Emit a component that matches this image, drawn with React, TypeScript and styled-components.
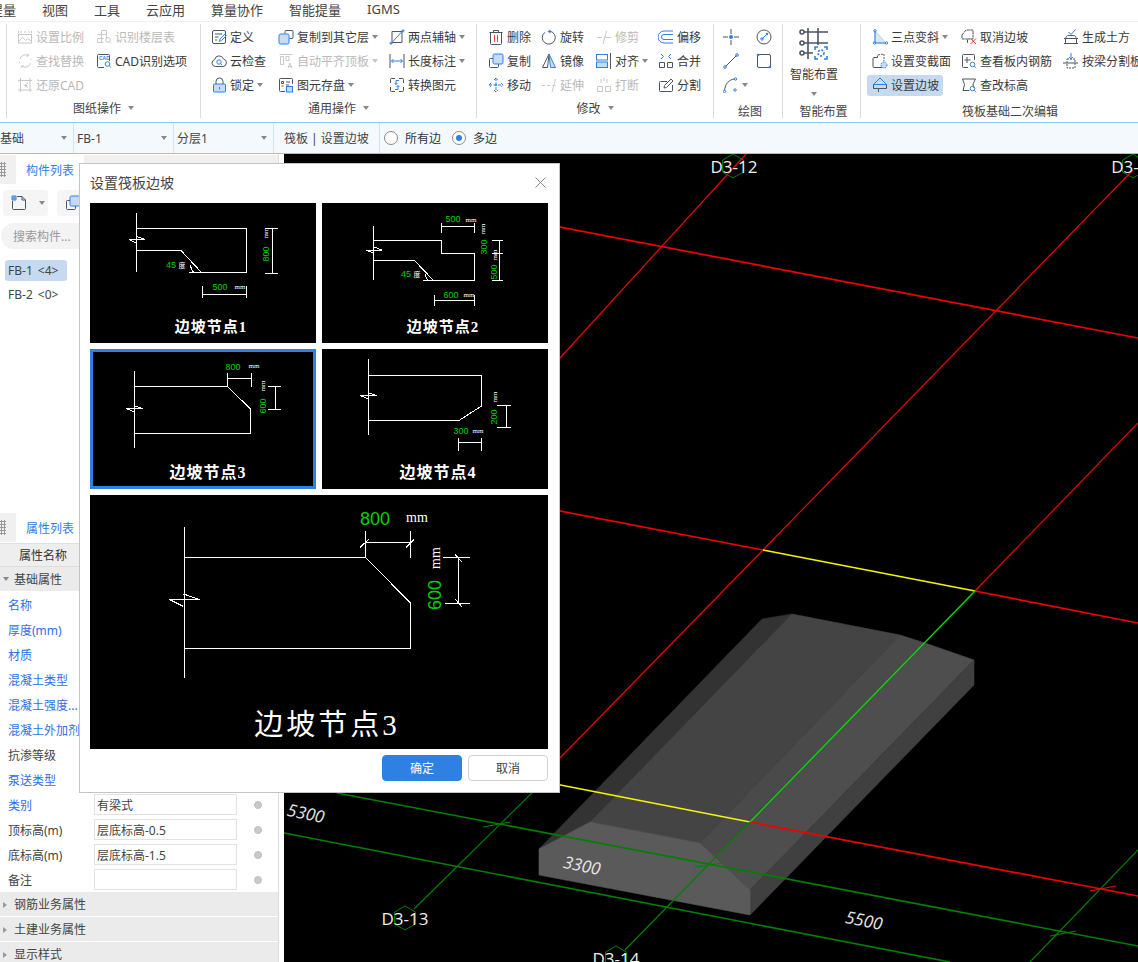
import React from "react";
import styled, { createGlobalStyle } from "styled-components";

const uiFont = `"Noto Sans", "Noto Sans CJK SC", sans-serif`;
const blue = "#2f80e3";

const GlobalStyle = createGlobalStyle`
  html, body {
    margin: 0;
    padding: 0;
    background: #fff;
    overflow: hidden;
  }
  * {
    box-sizing: border-box;
  }
`;

/* ---------- icons ---------- */

const IconSvg = styled.svg<{ $off?: boolean }>`
  width: 16px;
  height: 16px;
  flex: none;
  fill: none;
  stroke: ${(p) => (p.$off ? "#c8c8c8" : "#4b5563")};
  stroke-width: 1;

  .a {
    stroke: ${(p) => (p.$off ? "#c8c8c8" : blue)};
  }
  .f {
    stroke: ${(p) => (p.$off ? "#c8c8c8" : blue)};
    fill: ${(p) => (p.$off ? "#ececec" : "#c6dcf6")};
  }
  .d {
    stroke: none;
    fill: ${(p) => (p.$off ? "#c8c8c8" : blue)};
  }
  .r {
    stroke: #e0403a;
  }
  text {
    stroke: none;
    fill: ${blue};
    font: 700 5px "Liberation Sans", sans-serif;
  }
`;

const glyphs: Record<string, React.ReactNode> = {
  scale: (
    <>
      <path d="M1.500 2v2.500M14.500 2v2.500M3 3h2M7 3h2M11 3h2" />
      <rect x="1.500" y="5.500" width="13" height="8.500" />
      <path d="M2 12l3.500-3.500 3 3 2-2 3.500 2.500" />
    </>
  ),
  floorTable: (
    <>
      <path d="M5.500 1.500h5v4h-5zM1.500 5.500h9v4M5.500 5.500v8M1.500 9.500v4h6M1.500 9.500h6" />
      <circle cx="12" cy="11" r="2.300" />
      <path d="M13.700 12.800l1.600 1.600" />
    </>
  ),
  findReplace: <path d="M3 6a5.500 5.500 0 0 1 8-3.500M13.500 10a5.500 5.500 0 0 1-8 3.500M11 .8l.5 2-2 .5M5 15l-.5-2 2-.5M2.500 9v1M14 6v1" />,
  cadOptions: (
    <>
      <path d="M8 14.500H2.500a1 1 0 0 1-1-1v-11a1 1 0 0 1 1-1h10a1 1 0 0 1 1 1V8" />
      <text x="3" y="7">CAD</text>
      <circle className="a" cx="11.500" cy="11" r="2.300" />
      <path className="a" d="M13.200 12.800l1.600 1.600" />
    </>
  ),
  restoreCad: <path d="M1 3.500h14M1 13h14M3.500 1v14M13 1v14M11 6L7.500 8.500 11 10.500M7.500 8.500h3" />,
  define: (
    <>
      <rect x="1.500" y="1.500" width="13" height="13" rx="1.500" />
      <path d="M4 5h7M4 8h3.500M4 11h2" />
      <path className="a" d="M8.500 12.500l.5-2.500 5-5 1.500 1.500-5 5z" />
    </>
  ),
  cloud: (
    <>
      <path d="M4.500 13.500a3.500 3.500 0 0 1-.8-6.900 4.500 4.500 0 0 1 8.700-.6 3.800 3.800 0 0 1-.4 7.500z" />
      <circle className="a" cx="8" cy="9" r="2.200" />
      <path className="a" d="M9.600 10.600l1.400 1.400" />
    </>
  ),
  lock: (
    <>
      <rect className="f" x="2.500" y="7" width="12" height="8" rx="1" />
      <path d="M5 7V4.500a3.500 3.500 0 0 1 7 0V7" />
      <path className="a" d="M8.500 10v2.500" />
    </>
  ),
  copyTo: (
    <>
      <path d="M7 4.500V2.500a1 1 0 0 1 1-1h6a1 1 0 0 1 1 1v6a1 1 0 0 1-1 1h-2.500" />
      <rect className="f" x="1" y="5" width="10" height="10" rx="1.500" />
    </>
  ),
  autoAlign: <path d="M1.500 1.500h13M2.500 3.500h3v8h-3zM8 3.500h3v4H8zM10 15l2-5 2 5M10.800 13.500h2.400" />,
  saveElem: (
    <>
      <path d="M7 14.500H2.500a1 1 0 0 1-1-1v-11a1 1 0 0 1 1-1h11a1 1 0 0 1 1 1V7" />
      <path d="M3.500 4.500h2v2h-2zM8 5h4M3.500 9h2M8 8h3" />
      <rect className="f" x="8.500" y="9.500" width="6" height="5.500" />
    </>
  ),
  twoPoint: (
    <>
      <path d="M3 2.500h10M3 13.500h10M3 2.500v11M13 2.500v11" />
      <path className="a" d="M1.500 15L14.500 1" />
      <circle className="a" cx="14" cy="1.800" r="1" />
      <circle className="a" cx="2" cy="14.300" r="1" />
    </>
  ),
  lengthDim: (
    <>
      <path d="M1 1v14M15 1v14" />
      <path className="a" d="M2.500 8h11M4.500 6L2.500 8l2 2M11.500 6l2 2-2 2" />
    </>
  ),
  convert: (
    <>
      <path d="M6 1.500H2.500a1 1 0 0 0-1 1V6M10 1.500h3.500a1 1 0 0 1 1 1V6M1.500 10v3.500a1 1 0 0 0 1 1H6M14.500 10v3.500a1 1 0 0 1-1 1H10" />
      <path className="a" d="M10 3.500H7v4M5.500 6L7 7.500 8.500 6M6 12.500h3v-4M7.500 10L9 8.500l1.500 1.500" />
    </>
  ),
  trash: (
    <>
      <path d="M1.500 3.500h13M5.500 3.500V1.500h5v2M2.500 3.500v11a1 1 0 0 0 1 1h9a1 1 0 0 0 1-1v-11" />
      <path className="r" d="M6.500 6v7M9.500 6v7" />
    </>
  ),
  rotate: (
    <>
      <path d="M9 2.200A6.500 6.500 0 1 1 4 3.300" />
      <path className="d" d="M9.500 .5v4L6.500 2.500z" />
    </>
  ),
  trim: <path d="M1 8.500h5M9 8.500h6M10.500 2L7 15" />,
  offset: (
    <>
      <path className="a" d="M15 2H6a6 6 0 0 0 0 12h9" />
      <path className="a" d="M15 5.500H6a2.500 2.500 0 0 0 0 5h9" />
    </>
  ),
  copy: (
    <>
      <path d="M5 5.500H2.500a1 1 0 0 0-1 1v7a1 1 0 0 0 1 1h7a1 1 0 0 0 1-1V11" />
      <rect className="f" x="5" y="1" width="10" height="10" rx="1.500" />
    </>
  ),
  mirror: (
    <>
      <path d="M8 1L1.500 14.500h5z" />
      <path className="f" d="M8 1l6.500 13.500h-5z" />
    </>
  ),
  align: (
    <>
      <rect className="a" x=".5" y="1.500" width="11" height="5.500" />
      <rect className="f" x=".5" y="9" width="11" height="5.500" />
      <path d="M14.500 0v16" />
    </>
  ),
  merge: (
    <>
      <path d="M1.500 9.500h5v5h-5zM9.500 9.500h5v5h-5z" />
      <path className="a" d="M3 1l2.500 2.500L3 6M13 1l-2.500 2.500L13 6" />
    </>
  ),
  move: (
    <>
      <path className="a" d="M8 1v14M1 8h14M6 3l2-2 2 2M6 13l2 2 2-2M3 6L1 8l2 2M13 6l2 2-2 2" strokeDasharray="3 1.500" />
      <circle className="d" cx="8" cy="8" r="1" />
    </>
  ),
  extend: <path d="M1 8.500h3M6 8.500h3M11.500 8.500h3M14.500 2L11 15" />,
  breakAt: <path d="M1.500 9.500h5v5h-5zM9.500 9.500h5v5h-5zM5 2v4M8 1v3M11 2v4" />,
  split: (
    <>
      <path d="M14.500 8v5.500a1 1 0 0 1-1 1h-11a1 1 0 0 1-1-1v-8a1 1 0 0 1 1-1H9" />
      <path d="M6 11l.5-2.500L13 2l2 2-6.500 6.500z" />
    </>
  ),
  point: (
    <>
      <path d="M8 0v5M8 11v5M0 8h5M11 8h5" />
      <circle className="d" cx="8" cy="8" r="2" />
    </>
  ),
  circleRadius: (
    <>
      <circle cx="8" cy="8" r="7" />
      <path className="a" d="M6 10l5-5" />
      <circle className="a" cx="6" cy="10" r="1.200" />
      <circle className="d" cx="11" cy="5" r="1.200" />
    </>
  ),
  line: (
    <>
      <path d="M2.500 13.500l11-11" />
      <circle className="a" cx="2" cy="14" r="1.300" />
      <circle className="a" cx="14" cy="2" r="1.300" />
    </>
  ),
  box: (
    <>
      <rect x="1.500" y="1.500" width="13" height="13" rx="1.500" />
      <circle className="d" cx="2" cy="2" r="1.300" />
      <circle className="d" cx="14" cy="14" r="1.300" />
    </>
  ),
  arc: (
    <>
      <path d="M1.500 13.500C2 7 6 2.500 11.500 2" />
      <circle className="a" cx="1.500" cy="14.500" r="1.200" />
      <circle className="a" cx="12.500" cy="2" r="1.200" />
      <circle className="a" cx="12" cy="13" r="1.200" />
    </>
  ),
  threePoint: (
    <>
      <path d="M3 2l11 12H3z" fill="#d9e7f7" stroke="#b8cfe9" />
      <path className="a" d="M3 2v12h11" />
      <circle className="a" cx="3" cy="1.800" r="1.200" />
      <circle className="a" cx="2.500" cy="14" r="1.200" />
      <circle className="a" cx="14.500" cy="14" r="1.200" />
    </>
  ),
  section: (
    <>
      <path d="M5.500 4.500H2a1 1 0 0 0-1 1v8a1 1 0 0 0 1 1h8" />
      <path d="M5.500 4.500V2L12 1v7" strokeDasharray="2 1" />
      <circle className="f" cx="12" cy="12" r="3" strokeDasharray="1.500 1" />
    </>
  ),
  cancelSlope: (
    <>
      <path d="M1 6l4-5h7v9H6.500V14M1 6v4h5.500" strokeDasharray="3 .6" />
      <path className="r" d="M9.500 9.500l5.500 5.500M15 9.500L9.500 15" />
    </>
  ),
  rebarView: (
    <>
      <path d="M7 14.500H2.500a1 1 0 0 1-1-1v-11a1 1 0 0 1 1-1h10a1 1 0 0 1 1 1V7" />
      <path d="M6 4v6M3.500 7h6" />
      <circle className="a" cx="11.500" cy="11.500" r="2.300" />
      <path className="a" d="M13.200 13.200l1.600 1.600" />
    </>
  ),
  earth: (
    <>
      <path d="M1 9.500h14M1 14.500h14M2.500 9.500v5M13.500 9.500v5" />
      <path d="M3 9.500C3 6 5 6.500 8 6.500s5-.5 5 3" />
      <path className="a" d="M5.500 3l2.500 2.500L12.500.5" />
    </>
  ),
  splitBeam: (
    <>
      <path d="M0 10h15" />
      <path d="M4 6h8v9H4z" strokeDasharray="2 1" />
      <path className="a" d="M8 0v6M6 4l2 2 2-2" />
    </>
  ),
  setSlope: (
    <>
      <path className="f" d="M8 1l6.500 6.500h-13z" />
      <path d="M1.500 7.500v4h5V15M6.500 11.500h8V7.500" />
    </>
  ),
  checkHeight: (
    <>
      <path d="M1.500 2h13L12 7l.5 3.500M1.500 2l2 5.500-1.500 6h6.500" />
      <circle className="a" cx="11.500" cy="11.500" r="2.300" />
      <path className="a" d="M13.200 13.200l1.600 1.600" />
    </>
  ),
  newFile: (
    <>
      <path d="M6 1.500h5l3.500 3.500v8.500a1 1 0 0 1-1 1h-11a1 1 0 0 1-1-1V6" />
      <path d="M11 1.500V5h3.500" />
      <path className="a" d="M1 1h4v4H1zM1 3h4M3 1v4" />
    </>
  ),
};

const Icon = ({ name, off }: { name: string; off?: boolean }) => (
  <IconSvg viewBox="0 0 16 16" $off={off}>
    {glyphs[name]}
  </IconSvg>
);

const Caret = styled.span<{ $off?: boolean }>`
  display: block;
  flex: none;
  width: 0;
  height: 0;
  border-left: 3px solid transparent;
  border-right: 3px solid transparent;
  border-top: 4px solid ${(p) => (p.$off ? "#c8c8c8" : "#888")};
`;

/* ---------- menu + ribbon ---------- */

const Page = styled.div`
  position: relative;
  width: 1138px;
  height: 962px;
  display: flex;
  flex-direction: column;
  overflow: hidden;
  background: #fff;
  font-family: ${uiFont};
  font-size: 12px;
  color: #333;
`;

const MenuBar = styled.div`
  height: 22px;
  flex: none;
  display: flex;
  align-items: center;
  gap: 26px;
  margin-left: -10px;
  padding-bottom: 3px;
  font-size: 13px;
  color: #444;
  border-bottom: 1px solid #f0f0f0;
`;

const Ribbon = styled.div`
  height: 100px;
  flex: none;
  display: flex;
  padding: 2px 0 4px 6px;
  overflow: hidden;
`;

const RibbonGroup = styled.div<{ $width: number; $first?: boolean; $last?: boolean }>`
  flex: none;
  width: ${(p) => p.$width}px;
  display: flex;
  flex-direction: column;
  border-right: ${(p) => (p.$last ? "none" : "1px solid #dcdcdc")};
  border-left: ${(p) => (p.$first ? "1px solid #dcdcdc" : "none")};
`;

const ToolGrid = styled.div<{ $cols: string; $pad: number }>`
  height: 73px;
  flex: none;
  padding: 1px 0 0 ${(p) => p.$pad}px;
  display: grid;
  grid-auto-flow: column;
  grid-template-rows: repeat(3, 24px);
  grid-template-columns: ${(p) => p.$cols};
`;

const ToolItem = styled.div<{ $off?: boolean; $active?: boolean }>`
  display: flex;
  align-items: center;
  gap: 3px;
  white-space: nowrap;
  color: ${(p) => (p.$off ? "#b9b9b9" : "#3a3a3a")};
  ${(p) =>
    p.$active &&
    `
    align-self: center;
    height: 21px;
    width: 76px;
    margin-left: -5px;
    padding-left: 5px;
    border-radius: 3px;
    background: #c5daf0;
  `}
`;

const BigTool = styled.div`
  height: 73px;
  width: 62px;
  flex: none;
  padding-top: 4px;
  display: flex;
  flex-direction: column;
  align-items: center;
  color: #3a3a3a;
`;

const BigIcon = styled.svg`
  width: 30px;
  height: 32px;
  flex: none;
  fill: none;
  stroke: #4b5563;
  stroke-width: 1.600;
`;

const BigText = styled.div`
  flex: none;
  line-height: 16px;
  margin: 7px 0 9px;
`;

const GroupLabel = styled.div<{ $shift?: number; $low?: boolean }>`
  height: 21px;
  display: flex;
  align-items: center;
  justify-content: center;
  gap: 7px;
  padding-left: ${(p) => p.$shift || 0}px;
  padding-top: ${(p) => (p.$low ? 6 : 0)}px;
  color: #444;
  white-space: nowrap;
`;

type Tool = { icon: string; text?: string; off?: boolean; caret?: boolean; active?: boolean };

const drawingTools: Tool[] = [
  { icon: "scale", text: "设置比例", off: true },
  { icon: "findReplace", text: "查找替换", off: true },
  { icon: "restoreCad", text: "还原CAD", off: true },
  { icon: "floorTable", text: "识别楼层表", off: true },
  { icon: "cadOptions", text: "CAD识别选项" },
];

const commonTools: Tool[] = [
  { icon: "define", text: "定义" },
  { icon: "cloud", text: "云检查" },
  { icon: "lock", text: "锁定", caret: true },
  { icon: "copyTo", text: "复制到其它层", caret: true },
  { icon: "autoAlign", text: "自动平齐顶板", off: true, caret: true },
  { icon: "saveElem", text: "图元存盘", caret: true },
  { icon: "twoPoint", text: "两点辅轴", caret: true },
  { icon: "lengthDim", text: "长度标注", caret: true },
  { icon: "convert", text: "转换图元" },
];

const modifyTools: Tool[] = [
  { icon: "trash", text: "删除" },
  { icon: "copy", text: "复制" },
  { icon: "move", text: "移动" },
  { icon: "rotate", text: "旋转" },
  { icon: "mirror", text: "镜像" },
  { icon: "extend", text: "延伸", off: true },
  { icon: "trim", text: "修剪", off: true },
  { icon: "align", text: "对齐", caret: true },
  { icon: "breakAt", text: "打断", off: true },
  { icon: "offset", text: "偏移" },
  { icon: "merge", text: "合并" },
  { icon: "split", text: "分割" },
];

const drawTools: Tool[] = [
  { icon: "point" },
  { icon: "line" },
  { icon: "arc", caret: true },
  { icon: "circleRadius" },
  { icon: "box" },
];

const raftTools: Tool[] = [
  { icon: "threePoint", text: "三点变斜", caret: true },
  { icon: "section", text: "设置变截面" },
  { icon: "setSlope", text: "设置边坡", active: true },
  { icon: "cancelSlope", text: "取消边坡" },
  { icon: "rebarView", text: "查看板内钢筋" },
  { icon: "checkHeight", text: "查改标高" },
  { icon: "earth", text: "生成土方" },
  { icon: "splitBeam", text: "按梁分割板" },
];

const ToolList = ({ tools }: { tools: Tool[] }) => (
  <>
    {tools.map((t) => (
      <ToolItem key={t.icon} $off={t.off} $active={t.active}>
        <Icon name={t.icon} off={t.off} />
        {t.text && <span>{t.text}</span>}
        {t.caret && <Caret $off={t.off} />}
      </ToolItem>
    ))}
  </>
);

/* ---------- option bar ---------- */

const OptionBar = styled.div`
  height: 32px;
  flex: none;
  display: flex;
  align-items: center;
  background: #f3f9fd;
  border-top: 1px solid #8fc4f5;
  border-bottom: 1px solid #8fc4f5;
`;

const SelectCell = styled.div<{ $width: number; $clip?: boolean }>`
  width: ${(p) => p.$width}px;
  height: 100%;
  flex: none;
  display: flex;
  align-items: center;
  justify-content: space-between;
  padding: 0 6px 0 ${(p) => (p.$clip ? 0 : 3)}px;
  border-right: 1px solid #d2e4f3;
  color: #444;
`;

const ModeLabel = styled.div`
  width: 106px;
  height: 100%;
  flex: none;
  display: flex;
  align-items: center;
  padding-left: 10px;
  border-right: 1px solid #d2e4f3;
  color: #444;
  white-space: nowrap;
`;

const RadioGroup = styled.div`
  display: flex;
  align-items: center;
  padding-left: 4px;
  gap: 11px;
`;

const RadioOption = styled.label`
  display: flex;
  align-items: center;
  gap: 7px;
  color: #333;
`;

const RadioMark = styled.span<{ $on?: boolean }>`
  width: 14px;
  height: 14px;
  border-radius: 50%;
  border: 1px solid #8a8a8a;
  background: #fff;
  display: flex;
  align-items: center;
  justify-content: center;

  &::after {
    content: "";
    width: 6px;
    height: 6px;
    border-radius: 50%;
    background: ${(p) => (p.$on ? blue : "transparent")};
  }
`;

/* ---------- left panels ---------- */

const Workspace = styled.div`
  flex: 1;
  min-height: 0;
  display: flex;
  gap: 5px;
`;

const LeftPanel = styled.div`
  width: 279px;
  flex: none;
  display: flex;
  flex-direction: column;
  border-right: 1px solid #ddd;
  overflow: hidden;
`;

const ComponentSection = styled.section`
  height: 358px;
  flex: none;
`;

const PanelHeader = styled.div`
  height: 29px;
  margin-top: 1px;
  display: flex;
  background: #f0f0f0;
`;

const Grip = styled.div`
  width: 16px;
  flex: none;
  position: relative;

  &::before {
    content: "";
    position: absolute;
    left: 0;
    top: 7px;
    width: 6px;
    height: 15px;
    background-image: radial-gradient(#999 1px, transparent 1.100px);
    background-size: 3px 3px;
  }
`;

const PanelTab = styled.div`
  width: 68px;
  background: #fff;
  color: ${blue};
  display: flex;
  align-items: center;
  padding-left: 10px;
  white-space: nowrap;
`;

const SmallToolbar = styled.div`
  display: flex;
  gap: 9px;
  padding: 6px 0 0 3px;
`;

const SmallButton = styled.div<{ $width: number }>`
  width: ${(p) => p.$width}px;
  height: 26px;
  display: flex;
  align-items: center;
  gap: 12px;
  padding-left: 8px;
  border-radius: 3px;
  background: #f5f5f5;
`;

const SearchBox = styled.div`
  margin: 7px 0 0 1px;
  height: 26px;
  border-radius: 13px;
  background: #f3f3f3;
  color: #999;
  display: flex;
  align-items: center;
  padding-left: 12px;
`;

const ComponentList = styled.div`
  padding: 11px 0 0 5px;
  display: flex;
  flex-direction: column;
  gap: 3px;
`;

const ComponentRow = styled.div<{ $active?: boolean }>`
  width: 62px;
  height: 21px;
  padding-left: 3px;
  display: flex;
  align-items: center;
  gap: 5px;
  border-radius: 3px;
  background: ${(p) => (p.$active ? "#c5daf0" : "transparent")};
  color: #444;
  white-space: nowrap;
`;

const ColumnHeader = styled.div`
  height: 24px;
  margin-top: 1px;
  padding-left: 19px;
  display: flex;
  align-items: center;
  background: #eee;
  border-top: 1px solid #e0e0e0;
  border-bottom: 1px solid #ddd;
`;

const SectionRow = styled.div`
  height: 24px;
  margin-bottom: 1px;
  display: flex;
  align-items: center;
  background: #ebebeb;
  color: #444;
  padding-left: 14px;
  position: relative;
`;

const SectionMark = styled.span<{ $open?: boolean }>`
  position: absolute;
  left: 3px;
  top: 10px;
  width: 0;
  height: 0;
  ${(p) =>
    p.$open
      ? `border-left: 3px solid transparent; border-right: 3px solid transparent; border-top: 4px solid #888;`
      : `border-top: 3px solid transparent; border-bottom: 3px solid transparent; border-left: 4px solid #999;`}
`;

const PropRow = styled.div`
  height: 25px;
  display: flex;
  align-items: center;
  padding-left: 8px;
`;

const PropName = styled.div<{ $link?: boolean }>`
  width: 86px;
  flex: none;
  white-space: nowrap;
  overflow: hidden;
  color: ${(p) => (p.$link ? "#2d6fe8" : "#444")};
`;

const PropValue = styled.div`
  width: 143px;
  height: 21px;
  flex: none;
  display: flex;
  align-items: center;
  padding-left: 2px;
  border: 1px solid #e2e2e2;
  color: #444;
`;

const PropDot = styled.span`
  width: 8px;
  height: 8px;
  margin-left: 17px;
  border-radius: 50%;
  background: #c9c9c9;
  border: 1px solid #bdbdbd;
`;

const props: { name: string; link?: boolean; value?: string }[] = [
  { name: "名称", link: true },
  { name: "厚度(mm)", link: true },
  { name: "材质", link: true },
  { name: "混凝土类型", link: true },
  { name: "混凝土强度...", link: true },
  { name: "混凝土外加剂", link: true },
  { name: "抗渗等级" },
  { name: "泵送类型", link: true },
  { name: "类别", link: true, value: "有梁式" },
  { name: "顶标高(m)", value: "层底标高-0.5" },
  { name: "底标高(m)", value: "层底标高-1.5" },
  { name: "备注" },
];

/* ---------- 3d view ---------- */

const Viewport = styled.div`
  flex: 1;
  min-width: 0;
  background: #000;

  svg {
    display: block;
    width: 100%;
    height: 100%;
  }
`;

const GridLabel = styled.text`
  fill: #eee;
  font: 17px "Open Sans", sans-serif;
  text-anchor: middle;
  dominant-baseline: central;
`;

const SpanLabel = styled.text`
  fill: #e6e6e6;
  font: italic 17px "Open Sans", sans-serif;
  text-anchor: middle;
  dominant-baseline: central;
`;

const hexagon = (cx: number, cy: number, r = 12) =>
  [0, 1, 2, 3, 4, 5]
    .map((i) => {
      const a = (Math.PI / 3) * i - Math.PI / 2;
      return `${(cx + r * Math.cos(a)).toFixed(1)},${(cy + r * Math.sin(a)).toFixed(1)}`;
    })
    .join(" ");

const slabFaces = [
  { fill: "#333333", points: "539,849 590,822 792,614 762,619" },
  { fill: "#444444", points: "590,822 700,843 900,635 792,614" },
  { fill: "#4a4a4a", points: "700,843 714,856 925,643 900,635" },
  { fill: "#4e4e4e", points: "714,856 750,890 974,660 925,643" },
  { fill: "#404040", points: "750,890 974,660 974,685 750,915" },
  { fill: "#5a5a5a", points: "539,849 590,822 700,843 750,890 750,915 539,875" },
];

const gridLines = [
  { stroke: "#f00000", w: 1.700, d: "M284 174L1138 338" },
  { stroke: "#f00000", w: 1.700, d: "M284 458L763 550M975 591L1138 623" },
  { stroke: "#f00000", w: 1.700, d: "M750 822L1138 896" },
  { stroke: "#f00000", w: 1.200, d: "M746 154L560 358" },
  { stroke: "#f00000", w: 1.200, d: "M1133 170L763 550L560 758" },
  { stroke: "#f00000", w: 1.200, d: "M1138 423L975 591" },
  { stroke: "#f4f400", w: 1.700, d: "M763 550L975 591M540 781L750 822" },
  { stroke: "#00e000", w: 1.300, d: "M975 591L750 822" },
  { stroke: "#008000", w: 1.200, d: "M750 822L625 950M540 785L414 909" },
  { stroke: "#008000", w: 1.600, d: "M337 793L1138 946M284 833L950 962" },
  { stroke: "#008000", w: 1.200, d: "M1138 850L1030 962" },
  { stroke: "#008000", w: 1.200, d: "M483 827L510 822M695 867L722 863M1050 936L1076 931" },
  { stroke: "#f00000", w: 1.200, d: "M1090 891L1116 886" },
];

/* ---------- dialog ---------- */

const Dialog = styled.div`
  position: absolute;
  left: 79px;
  top: 163px;
  width: 481px;
  height: 630px;
  background: #fff;
  border: 1px solid #c4c4c4;
  padding: 0 11px 0 10px;
  display: flex;
  flex-direction: column;
`;

const DialogHead = styled.div`
  height: 39px;
  flex: none;
  display: flex;
  align-items: center;
  justify-content: space-between;
  padding: 0 2px 3px 0;
  font-size: 14px;
  color: #444;

  svg {
    width: 11px;
    height: 11px;
    stroke: #888;
  }
`;

const NodeGrid = styled.div`
  display: grid;
  grid-template-columns: repeat(2, 226px);
  grid-auto-rows: 140px;
  gap: 6px;
`;

const NodeCard = styled.div<{ $selected?: boolean }>`
  background: #000;
  box-shadow: ${(p) => (p.$selected ? `inset 0 0 0 3px ${blue}` : "none")};

  svg {
    display: block;
    width: 100%;
    height: 100%;
    fill: none;
    stroke: #fff;
  }
`;

const NodePreview = styled(NodeCard)`
  height: 254px;
  margin-top: 6px;
  flex: none;
`;

const DimValue = styled.text<{ $size: number }>`
  fill: #00d000;
  stroke: none;
  font: ${(p) => p.$size}px "Liberation Sans", sans-serif;
  text-anchor: middle;
  dominant-baseline: central;
`;

const DimUnit = styled.text<{ $size: number }>`
  fill: #fff;
  stroke: none;
  font: ${(p) => p.$size}px "Liberation Serif", "Noto Sans CJK SC", serif;
  text-anchor: middle;
  dominant-baseline: central;
`;

const NodeCaption = styled.text<{ $size: number; $thin?: boolean }>`
  fill: #fff;
  stroke: none;
  font-family: "Liberation Serif", "Noto Sans CJK SC", serif;
  font-size: ${(p) => p.$size}px;
  font-weight: ${(p) => (p.$thin ? 400 : 700)};
  letter-spacing: ${(p) => (p.$thin ? 3 : 1)}px;
  text-anchor: middle;
  dominant-baseline: central;
`;

const DialogFoot = styled.div`
  display: flex;
  justify-content: flex-end;
  gap: 6px;
  margin-top: 6px;
`;

const DialogButton = styled.button<{ $primary?: boolean }>`
  width: 80px;
  height: 26px;
  padding: 0;
  border-radius: 4px;
  border: 1px solid ${(p) => (p.$primary ? blue : "#cfcfcf")};
  background: ${(p) => (p.$primary ? blue : "#fff")};
  color: ${(p) => (p.$primary ? "#fff" : "#444")};
  font: 12px ${uiFont};
`;

type Label = { kind: "value" | "unit"; text: string; x: number; y: number; rot?: boolean };
type SlopeNode = { caption: string; size: number; cx: number; cy: number; d: string; labels: Label[] };

const nodes: SlopeNode[] = [
  {
    caption: "边坡节点1",
    size: 15,
    cx: 121,
    cy: 124,
    d: "M46.500 10V69M46.500 25.500H156.500V69.500H98.500M46.500 47.500H91L111.500 69.500M39 36.500H55L47 33.500M39 36.500L46.500 40M175 25.500H188M175 70H188M182.500 25.500V70M112.500 83V95M156.500 83V95M112.500 91.500H156.500M104 69.500A8 8 0 0 1 101 62",
    labels: [
      { kind: "unit", text: "mm", x: 176, y: 30, rot: true },
      { kind: "value", text: "800", x: 176, y: 51, rot: true },
      { kind: "value", text: "45", x: 81, y: 62 },
      { kind: "unit", text: "度", x: 92, y: 63 },
      { kind: "value", text: "500", x: 130, y: 84 },
      { kind: "unit", text: "mm", x: 150, y: 84 },
    ],
  },
  {
    caption: "边坡节点2",
    size: 15,
    cx: 121,
    cy: 124,
    d: "M51.500 23V77M51.500 37.500H119.500V50.500H152.500V77.500H100.500M51.500 57.500H92.500L111.500 77.500M44 47H60L52 44M44 47L51.500 50M119.500 20V30M152.500 20V30M119.500 23.500H152.500M170 37.500H181M170 50.500H181M170 77.500H181M177.500 37.500V77.500M112.500 92V103M152.500 92V103M112.500 97.500H152.500M106 77.500A7 7 0 0 1 104 71",
    labels: [
      { kind: "value", text: "500", x: 131, y: 16 },
      { kind: "unit", text: "mm", x: 149, y: 17 },
      { kind: "unit", text: "mm", x: 161, y: 26, rot: true },
      { kind: "value", text: "300", x: 162, y: 44, rot: true },
      { kind: "unit", text: "mm", x: 173, y: 52, rot: true },
      { kind: "value", text: "500", x: 172, y: 69, rot: true },
      { kind: "value", text: "45", x: 84, y: 71 },
      { kind: "unit", text: "度", x: 95, y: 72 },
      { kind: "value", text: "600", x: 129, y: 92 },
      { kind: "unit", text: "mm", x: 147, y: 92 },
    ],
  },
  {
    caption: "边坡节点3",
    size: 16,
    cx: 118,
    cy: 123,
    d: "M44.500 22V98.500M44.500 37.500H137.500L160.500 60V84.500H44.500M36 59.500H52.500L45 57M36 59.500L44.500 63M137.500 24V37.500M161 24V38M137.500 29.500H161M178 37.500H191M178 60.500H191M185.500 37.500V60.500",
    labels: [
      { kind: "value", text: "800", x: 143, y: 18 },
      { kind: "unit", text: "mm", x: 164, y: 17 },
      { kind: "unit", text: "mm", x: 173, y: 37, rot: true },
      { kind: "value", text: "600", x: 173, y: 57, rot: true },
    ],
  },
  {
    caption: "边坡节点4",
    size: 16,
    cx: 116,
    cy: 123,
    d: "M46.500 10V86M46.500 26.500H159.500V57L137 71.500H46.500M38 46.500H54.500L47 44M38 46.500L46.500 50M175 56H188.500M175 78.500H188.500M184 56V78.500M136.500 89V102M159.500 89V102M136.500 93.500H159.500",
    labels: [
      { kind: "unit", text: "mm", x: 173, y: 48, rot: true },
      { kind: "value", text: "200", x: 172, y: 68, rot: true },
      { kind: "value", text: "300", x: 139, y: 82 },
      { kind: "unit", text: "mm", x: 156, y: 82 },
    ],
  },
];

const previewPath =
  "M94.500 32V182.500M94.500 62.500H275.500L320.500 108V153.500H94.500M79.500 104.500H109.500L93.500 99M79.500 104.500L93.500 111.500M275.500 36V62.500M320.500 36V62.500M275.500 47.500H320.500M270 52.500L279.500 43.500M316 52.500L324 44.500M353 62.500H380M355 108.500H380M368.500 62.500V108.500M365 59.500L372.500 67.500M365 104L372.500 112.500";

const NodeLabels = ({ labels, value, unit }: { labels: Label[]; value: number; unit: number }) => (
  <>
    {labels.map((l) => {
      const Text = l.kind === "value" ? DimValue : DimUnit;
      return (
        <Text
          key={`${l.text}-${l.x}`}
          x={l.x}
          y={l.y}
          $size={l.kind === "value" ? value : unit}
          transform={l.rot ? `rotate(-90 ${l.x} ${l.y})` : undefined}
        >
          {l.text}
        </Text>
      );
    })}
  </>
);

const App = () => {
  return (
    <Page>
      <GlobalStyle />

      <MenuBar>
        {["提量", "视图", "工具", "云应用", "算量协作", "智能提量", "IGMS"].map((m) => (
          <span key={m}>{m}</span>
        ))}
      </MenuBar>

      <Ribbon>
        <RibbonGroup $width={195} $first>
          <ToolGrid $cols="79px auto" $pad={10}>
            <ToolList tools={drawingTools} />
          </ToolGrid>
          <GroupLabel>
            图纸操作 <Caret />
          </GroupLabel>
        </RibbonGroup>
        <RibbonGroup $width={276}>
          <ToolGrid $cols="67px 111px auto" $pad={10}>
            <ToolList tools={commonTools} />
          </ToolGrid>
          <GroupLabel>
            通用操作 <Caret />
          </GroupLabel>
        </RibbonGroup>
        <RibbonGroup $width={237}>
          <ToolGrid $cols="53px 55px 62px auto" $pad={11}>
            <ToolList tools={modifyTools} />
          </ToolGrid>
          <GroupLabel>
            修改 <Caret />
          </GroupLabel>
        </RibbonGroup>
        <RibbonGroup $width={69}>
          <ToolGrid $cols="33px auto" $pad={9}>
            <ToolList tools={drawTools} />
          </ToolGrid>
          <GroupLabel $shift={4} $low>
            绘图
          </GroupLabel>
        </RibbonGroup>
        <RibbonGroup $width={78}>
          <BigTool>
            <BigIcon viewBox="0 0 30 32">
              <circle cx="3" cy="4" r="2" />
              <circle cx="3" cy="15" r="2" />
              <circle cx="3" cy="25" r="2" />
              <path d="M5 4h24M5 15h24M5 25h9M9 0v31M19 0v17" />
              <path d="M16 22v-3h3M25 19h3v3M28 28v3h-3M19 31h-3v-3" stroke={blue} />
              <circle cx="22" cy="25" r="3" stroke={blue} strokeDasharray="2 1.500" />
            </BigIcon>
            <BigText>智能布置</BigText>
            <Caret />
          </BigTool>
          <GroupLabel $shift={4} $low>
            智能布置
          </GroupLabel>
        </RibbonGroup>
        <RibbonGroup $width={298} $last>
          <ToolGrid $cols="89px 102px auto" $pad={11}>
            <ToolList tools={raftTools} />
          </ToolGrid>
          <GroupLabel $low>筏板基础二次编辑</GroupLabel>
        </RibbonGroup>
      </Ribbon>

      <OptionBar>
        <SelectCell $width={74} $clip>
          基础 <Caret />
        </SelectCell>
        <SelectCell $width={100}>
          FB-1 <Caret />
        </SelectCell>
        <SelectCell $width={100}>
          分层1 <Caret />
        </SelectCell>
        <ModeLabel>筏板 | 设置边坡</ModeLabel>
        <RadioGroup>
          <RadioOption>
            <RadioMark />
            所有边
          </RadioOption>
          <RadioOption>
            <RadioMark $on />
            多边
          </RadioOption>
        </RadioGroup>
      </OptionBar>

      <Workspace>
        <LeftPanel>
          <ComponentSection>
            <PanelHeader>
              <Grip />
              <PanelTab>构件列表</PanelTab>
            </PanelHeader>
            <SmallToolbar>
              <SmallButton $width={45}>
                <Icon name="newFile" />
                <Caret />
              </SmallButton>
              <SmallButton $width={45}>
                <Icon name="copy" />
              </SmallButton>
            </SmallToolbar>
            <SearchBox>搜索构件...</SearchBox>
            <ComponentList>
              <ComponentRow $active>
                <span>FB-1</span>
                <span>&lt;4&gt;</span>
              </ComponentRow>
              <ComponentRow>
                <span>FB-2</span>
                <span>&lt;0&gt;</span>
              </ComponentRow>
            </ComponentList>
          </ComponentSection>

          <section>
            <PanelHeader>
              <Grip />
              <PanelTab>属性列表</PanelTab>
            </PanelHeader>
            <ColumnHeader>属性名称</ColumnHeader>
            <SectionRow>
              <SectionMark $open />
              基础属性
            </SectionRow>
            {props.map((p) => (
              <PropRow key={p.name}>
                <PropName $link={p.link}>{p.name}</PropName>
                <PropValue>{p.value}</PropValue>
                <PropDot />
              </PropRow>
            ))}
            {["钢筋业务属性", "土建业务属性", "显示样式"].map((s) => (
              <SectionRow key={s}>
                <SectionMark />
                {s}
              </SectionRow>
            ))}
          </section>
        </LeftPanel>

        <Viewport>
          <svg viewBox="284 154 854 808" fill="none">
            {slabFaces.map((f) => (
              <polygon key={f.points} points={f.points} fill={f.fill} stroke={f.fill} strokeWidth={0.6} />
            ))}
            {gridLines.map((l) => (
              <path key={l.d} d={l.d} stroke={l.stroke} strokeWidth={l.w} />
            ))}
            <polygon points={hexagon(733, 166)} stroke="#008000" />
            <polygon points={hexagon(1133, 166)} stroke="#008000" />
            <polygon points={hexagon(405, 918)} stroke="#008000" />
            <polygon points={hexagon(616, 958)} stroke="#008000" />
            <GridLabel x={734} y={166}>D3-12</GridLabel>
            <GridLabel x={1125} y={166}>D3-</GridLabel>
            <GridLabel x={405} y={918}>D3-13</GridLabel>
            <GridLabel x={616} y={958}>D3-14</GridLabel>
            <SpanLabel transform="translate(306 813) rotate(12)">5300</SpanLabel>
            <SpanLabel transform="translate(582 865) rotate(11)">3300</SpanLabel>
            <SpanLabel transform="translate(864 920) rotate(11)">5500</SpanLabel>
          </svg>
        </Viewport>
      </Workspace>

      <Dialog>
        <DialogHead>
          设置筏板边坡
          <svg viewBox="0 0 11 11">
            <path d="M.5 .5l10 10M10.500 .5l-10 10" />
          </svg>
        </DialogHead>
        <NodeGrid>
          {nodes.map((n) => (
            <NodeCard key={n.caption} $selected={n.caption === "边坡节点3"}>
              <svg viewBox="0 0 226 140">
                <path d={n.d} shapeRendering="crispEdges" />
                <NodeLabels labels={n.labels} value={9} unit={7} />
                <NodeCaption x={n.cx} y={n.cy} $size={n.size}>
                  {n.caption}
                </NodeCaption>
              </svg>
            </NodeCard>
          ))}
        </NodeGrid>
        <NodePreview>
          <svg viewBox="0 0 458 254">
            <path d={previewPath} shapeRendering="crispEdges" />
            <NodeLabels
              value={18}
              unit={14}
              labels={[
                { kind: "value", text: "800", x: 285, y: 24 },
                { kind: "unit", text: "mm", x: 327, y: 22 },
                { kind: "unit", text: "mm", x: 345, y: 63, rot: true },
                { kind: "value", text: "600", x: 345, y: 100, rot: true },
              ]}
            />
            <NodeCaption $size={29} $thin x={237} y={230}>
              边坡节点3
            </NodeCaption>
          </svg>
        </NodePreview>
        <DialogFoot>
          <DialogButton $primary>确定</DialogButton>
          <DialogButton>取消</DialogButton>
        </DialogFoot>
      </Dialog>
    </Page>
  );
};

export default App;
